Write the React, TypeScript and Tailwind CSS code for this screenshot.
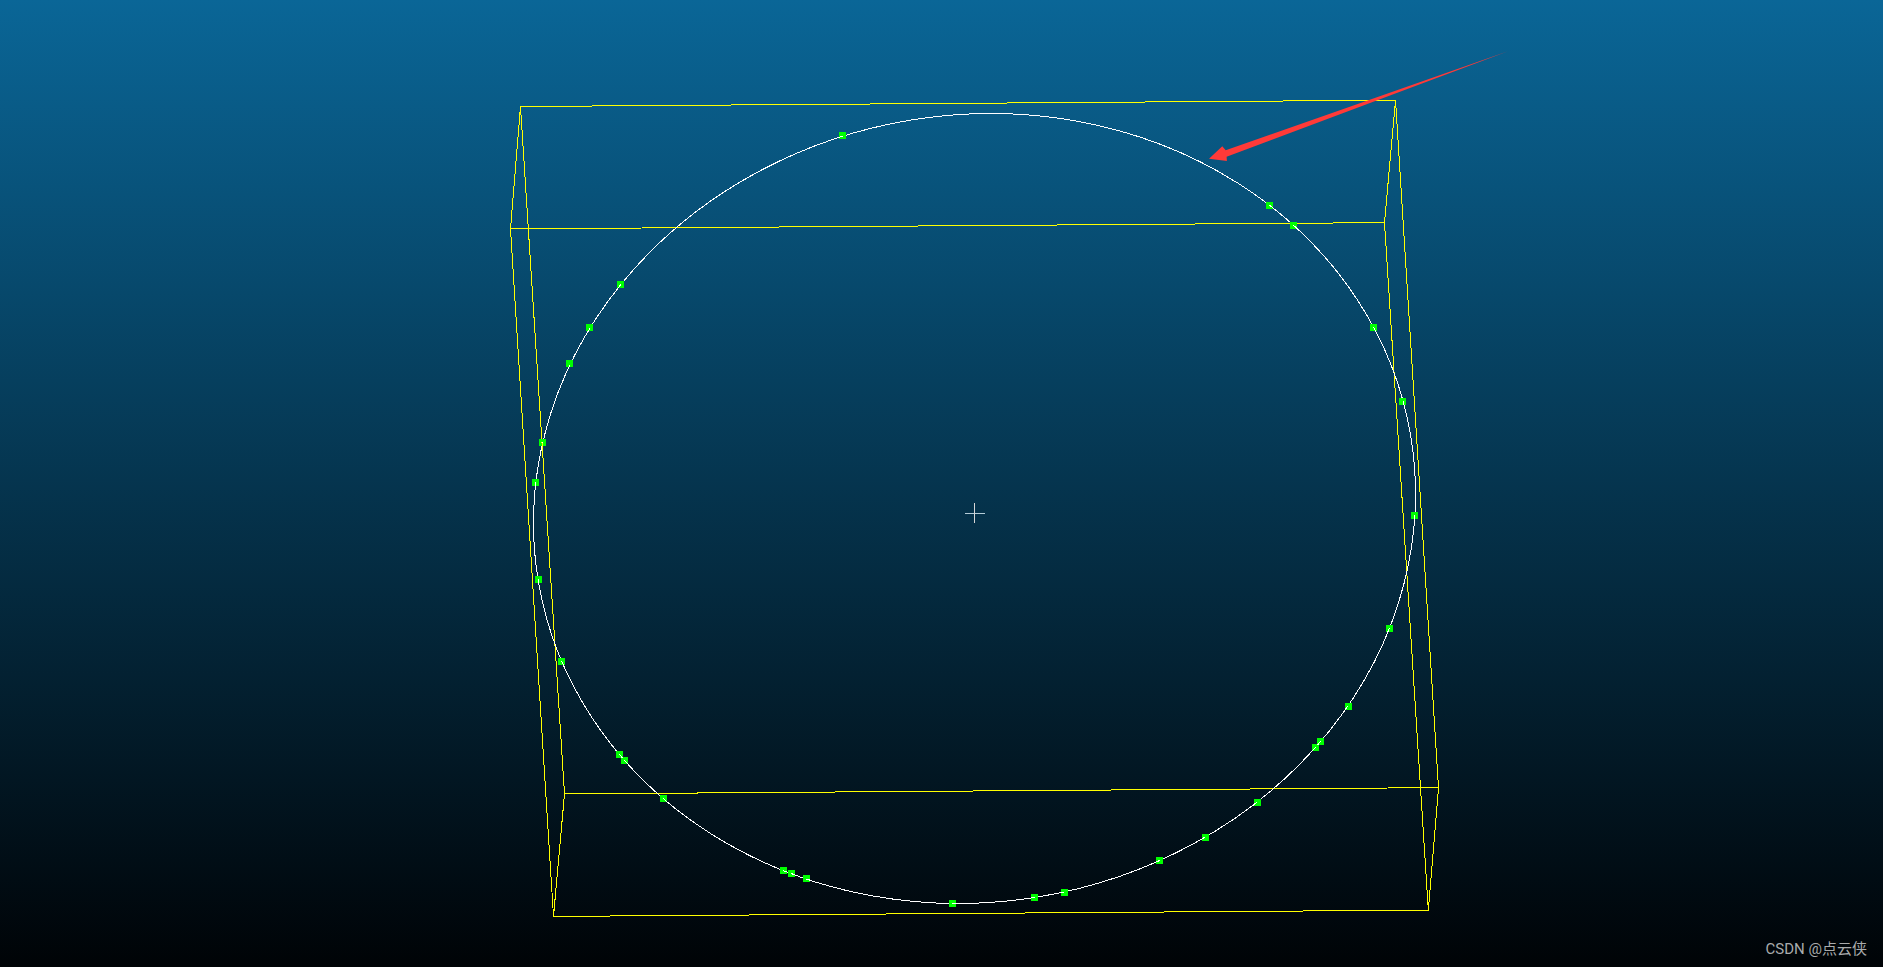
const WIDTH = 1883;
const HEIGHT = 967;

// fitted circle as it projects on screen
const circle = { cx: 974.5, cy: 508.5, rx: 442.2, ry: 393.6, angle: -9.34 };

const topFace = "520.5,106.53 1395.5,100.2 1384.5,222.63 510.5,228.96";
const bottomFace = "564.5,793.97 1438.5,787.64 1428.3,910.1 553.5,916.41";

const sideEdges = [
  [520.5, 106.5, 564.5, 793.9],
  [1395.5, 100.2, 1438.5, 787.6],
  [1384.5, 222.6, 1428.3, 910.1],
  [510.5, 228.9, 553.5, 916.4],
];

const points = [
  [842, 135],
  [620, 284],
  [589, 327],
  [569, 363],
  [542, 442],
  [535, 482],
  [538, 579],
  [561, 661],
  [619, 754],
  [624, 760],
  [663, 798],
  [783, 870],
  [791, 873],
  [806, 878],
  [952, 903],
  [1034, 897],
  [1064, 892],
  [1159, 860],
  [1205, 837],
  [1257, 802],
  [1315, 747],
  [1320, 741],
  [1348, 706],
  [1389, 628],
  [1414, 515],
  [1402, 401],
  [1373, 327],
  [1293, 225],
  [1269, 205],
];

function BoundingBox() {
  return (
    <g fill="none" stroke="#ffff00">
      <polygon points={topFace} />
      <polygon points={bottomFace} />
      {sideEdges.map(([x1, y1, x2, y2], i) => (
        <line key={i} x1={x1} y1={y1} x2={x2} y2={y2} />
      ))}
    </g>
  );
}

function FittedCircle() {
  return (
    <ellipse
      cx={circle.cx}
      cy={circle.cy}
      rx={circle.rx}
      ry={circle.ry}
      transform={`rotate(${circle.angle} ${circle.cx} ${circle.cy})`}
      fill="none"
      stroke="#ffffff"
    />
  );
}

function PointCloud() {
  return (
    <g fill="#00ff00">
      {points.map(([x, y]) => (
        <rect key={`${x}-${y}`} x={x - 3} y={y - 3} width={7} height={7} />
      ))}
    </g>
  );
}

// The lower half of every point sits behind the lines
function FrontClip() {
  return (
    <clipPath id="front">
      {points.map(([x, y]) => {
        const left = x < circle.cx === y < circle.cy;
        return (
          <rect
            key={`${x}-${y}`}
            x={left ? x - 3 : x}
            y={y}
            width={4}
            height={4}
          />
        );
      })}
    </clipPath>
  );
}

function Crosshair() {
  return (
    <g>
      <rect x={965} y={513} width={20} height={1} fill="#b4ccd8" />
      <rect x={974} y={503} width={1} height={20} fill="#d6d6d6" />
    </g>
  );
}

function Arrow() {
  return (
    <polygon
      points="1209,158.8 1222.3,146.2 1225.7,150.2 1508,51.3 1226.6,156.8 1226.9,161"
      fill="#ff3a38"
    />
  );
}

export default function App() {
  return (
    <main className="relative h-screen overflow-hidden bg-linear-to-b/srgb from-[#0a6697] to-[#000306]">
      <svg
        viewBox={`0 0 ${WIDTH} ${HEIGHT}`}
        className="block h-full w-full"
        role="img"
        aria-label="Circle fitted to a point cloud"
      >
        <defs>
          <FrontClip />
        </defs>
        <g shapeRendering="crispEdges">
          <BoundingBox />
          <FittedCircle />
          <PointCloud />
          <g clipPath="url(#front)">
            <FittedCircle />
            <BoundingBox />
          </g>
          <Crosshair />
        </g>
        <Arrow />
      </svg>
      <p className="absolute right-4 bottom-2 font-[Roboto,'Noto_Sans_CJK_SC',sans-serif] text-[15px] leading-5 text-[#a9abac]">
        CSDN @点云侠
      </p>
    </main>
  );
}
